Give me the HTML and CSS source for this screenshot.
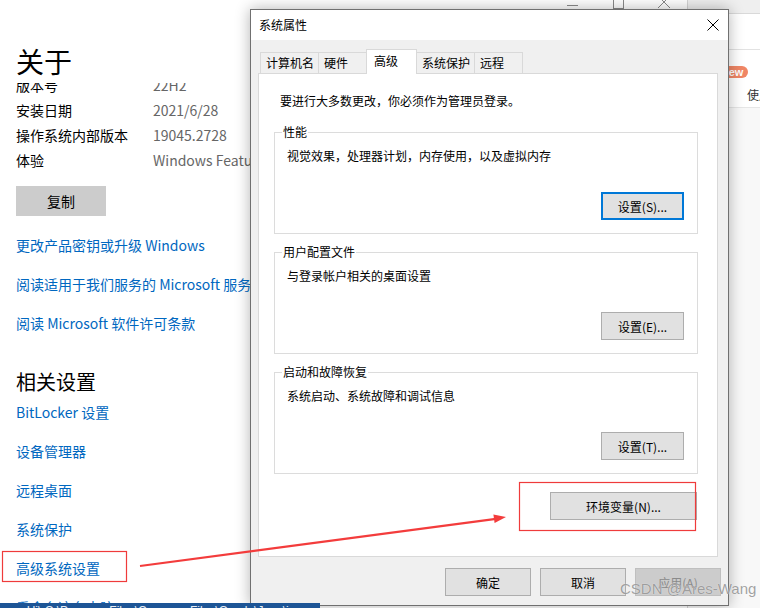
FILE: index.html
```html
<!DOCTYPE html>
<html lang="zh-CN">
<head>
<meta charset="utf-8">
<title>系统属性</title>
<link rel="stylesheet" href="styles.css">
</head>
<body>
<div class="desktop">

  <section class="settings">
    <div class="settings-caption">
      <svg class="caption-icons" width="137" height="10" viewBox="0 0 137 10">
        <line x1="17" y1="5.5" x2="28" y2="5.5" stroke="#8a8a8a" stroke-width="1"/>
        <rect x="63.5" y="-1.5" width="10" height="10" fill="none" stroke="#8a8a8a" stroke-width="1"/>
        <line x1="108" y1="-4" x2="120" y2="8" stroke="#8a8a8a" stroke-width="1"/>
        <line x1="120" y1="-4" x2="108" y2="8" stroke="#8a8a8a" stroke-width="1"/>
      </svg>
    </div>
    <header class="settings-header"><h1>关于</h1></header>
    <div class="settings-scroll">
      <div class="scroll-inner">
        <dl class="spec">
          <div class="spec-row"><dt>版本号</dt><dd>22H2</dd></div>
          <div class="spec-row"><dt>安装日期</dt><dd>2021/6/28</dd></div>
          <div class="spec-row"><dt>操作系统内部版本</dt><dd>19045.2728</dd></div>
          <div class="spec-row"><dt>体验</dt><dd>Windows Feature Experience Pack 1000.19041.1000.0</dd></div>
        </dl>
        <button class="copy-btn" type="button">复制</button>
        <ul class="links">
          <li><a href="#">更改产品密钥或升级 Windows</a></li>
          <li><a href="#">阅读适用于我们服务的 Microsoft 服务协议</a></li>
          <li><a href="#">阅读 Microsoft 软件许可条款</a></li>
        </ul>
        <h2 class="related-title">相关设置</h2>
        <ul class="links related">
          <li><a href="#">BitLocker 设置</a></li>
          <li><a href="#">设备管理器</a></li>
          <li><a href="#">远程桌面</a></li>
          <li><a href="#">系统保护</a></li>
          <li><a href="#">高级系统设置</a></li>
          <li><a href="#">重命名这台电脑</a></li>
        </ul>
      </div>
    </div>
  </section>

  <aside class="side-window">
    <div class="side-top"></div>
    <div class="side-toolbar"></div>
    <div class="side-content">
      <span class="badge">new</span>
      <span class="side-text">使用</span>
    </div>
  </aside>

  <div class="dialog">
    <div class="dlg-title">
      <h3>系统属性</h3>
      <span class="dlg-close">
        <svg width="12" height="12" viewBox="0 0 12 12">
          <line x1="0.5" y1="0.5" x2="11.5" y2="11.5" stroke="#000" stroke-width="1"/>
          <line x1="11.5" y1="0.5" x2="0.5" y2="11.5" stroke="#000" stroke-width="1"/>
        </svg>
      </span>
    </div>
    <div class="dlg-body">
      <div class="tabs">
        <span class="tab">计算机名</span>
        <span class="tab">硬件</span>
        <span class="tab active">高级</span>
        <span class="tab">系统保护</span>
        <span class="tab">远程</span>
      </div>
      <div class="panel">
        <p class="intro">要进行大多数更改，你必须作为管理员登录。</p>
        <fieldset class="group">
          <legend>性能</legend>
          <p class="group-desc">视觉效果，处理器计划，内存使用，以及虚拟内存</p>
          <div class="group-actions"><button class="btn btn-set focused" type="button">设置(S)...</button></div>
        </fieldset>
        <fieldset class="group">
          <legend>用户配置文件</legend>
          <p class="group-desc">与登录帐户相关的桌面设置</p>
          <div class="group-actions"><button class="btn btn-set" type="button">设置(E)...</button></div>
        </fieldset>
        <fieldset class="group">
          <legend>启动和故障恢复</legend>
          <p class="group-desc">系统启动、系统故障和调试信息</p>
          <div class="group-actions"><button class="btn btn-set" type="button">设置(T)...</button></div>
        </fieldset>
        <div class="env-row"><button class="btn btn-env" type="button">环境变量(N)...</button></div>
      </div>
      <div class="dlg-buttons">
        <button class="btn btn-dlg" type="button">确定</button>
        <button class="btn btn-dlg" type="button">取消</button>
        <button class="btn btn-dlg disabled" type="button">应用(A)</button>
      </div>
    </div>
  </div>

  <div class="taskbar-tip">...umHi\;C:\Program Files\Common Files\Oracle\Java\javapath</div>

  <svg class="annot" width="760" height="608" viewBox="0 0 760 608">
    <rect x="2.5" y="551.5" width="124" height="30" fill="none" stroke="#ef3b3b" stroke-width="1.2"/>
    <rect x="519.5" y="482.5" width="176" height="48" fill="none" stroke="#ef3b3b" stroke-width="1.2"/>
    <line x1="140" y1="566" x2="496" y2="518.8" stroke="#f33c3c" stroke-width="2.2"/>
    <polygon points="506,517 494.6,523 493.4,514.4" fill="#f33c3c"/>
  </svg>

  <div class="watermark">CSDN @Ares-Wang</div>
</div>
</body>
</html>
```

FILE: styles.css
```css
* { box-sizing: border-box; }
html, body { margin: 0; padding: 0; }
body {
  width: 760px;
  height: 608px;
  overflow: hidden;
  background: #fff;
  font-family: "Noto Sans CJK SC", "Noto Sans", sans-serif;
  color: #000;
}
.desktop { position: relative; width: 760px; height: 608px; overflow: hidden; }

/* background settings window */
.settings {
  position: absolute;
  left: 0; top: 0;
  width: 688px; height: 608px;
  background: #fff;
  border-right: 1px solid #d4d4d4;
  display: flex;
  flex-direction: column;
}
.settings-caption {
  flex: none;
  height: 10px;
  display: flex;
  justify-content: flex-end;
  overflow: hidden;
}
.caption-icons { display: block; }
.settings-header { flex: none; height: 73px; padding: 33px 16px 0; background: #fff; }
.settings-header h1 { margin: 0; font-size: 28px; font-weight: 400; line-height: 36px; }
.settings-scroll { flex: 1; min-height: 0; overflow: hidden; }
.scroll-inner { margin-top: -10px; padding-left: 16px; }
.spec { margin: 0; font-size: 14px; line-height: 25px; }
.spec-row { display: grid; grid-template-columns: 137px auto; white-space: nowrap; }
.spec dt { color: #000; }
.spec dd { margin: 0; color: #666; }
.copy-btn {
  display: block;
  margin-top: 13px;
  width: 90px; height: 30px;
  border: 0; padding: 0;
  background: #cccccc;
  font: 14px "Noto Sans CJK SC", sans-serif;
  color: #000;
}
.links {
  list-style: none;
  margin: 19px 0 0; padding: 0;
  display: flex; flex-direction: column; gap: 19px;
  font-size: 14px; line-height: 20px;
}
.links a { color: #0067c0; text-decoration: none; white-space: nowrap; }
.related-title { margin: 35px 0 0; font-size: 20px; font-weight: 400; line-height: 28px; }
.links.related { margin-top: 6px; }

/* right background window */
.side-window {
  position: absolute;
  left: 688px; top: 0;
  width: 72px; height: 608px;
  background: #f8f8f8;
}
.side-top { height: 14px; background: #efefef; border-bottom: 1px solid #d9d9d9; }
.side-toolbar { height: 36px; background: #fff; border-bottom: 1px solid #e2e2e2; }
.side-content {
  height: 58px;
  background: #fff;
  border-bottom: 1px solid #e6e6e6;
  padding: 16px 0 0 29px;
  display: flex; flex-direction: column; align-items: flex-start;
}
.badge {
  height: 12px; padding: 0 5px;
  border-radius: 6px;
  background: #f08665;
  color: #fff;
  font: 700 11px/12px "Liberation Sans", sans-serif;
}
.side-text { margin: 10px 0 0 30px; font-size: 12px; line-height: 14px; color: #333; white-space: nowrap; }

/* dialog */
.dialog {
  position: absolute;
  left: 250px; top: 9px;
  width: 479px; height: 597px;
  border: 1px solid #707070;
  background: #f0f0f0;
  display: flex; flex-direction: column;
  box-shadow: 0 0 14px rgba(0, 0, 0, 0.3);
  font-size: 12px;
}
.dlg-title {
  flex: none;
  height: 30px;
  background: #fff;
  display: flex; align-items: center; justify-content: space-between;
  padding-left: 8px;
}
.dlg-title h3 { margin: 0; font-size: 12px; font-weight: 400; line-height: 16px; margin-top: -1px; }
.dlg-close { width: 30px; height: 30px; display: flex; align-items: center; justify-content: center; margin-top: -1px; }
.dlg-close svg { display: block; }
.dlg-body { flex: 1; display: flex; flex-direction: column; padding: 9px 7px 9px 7px; }
.tabs {
  flex: none;
  height: 24px;
  display: flex; align-items: flex-end;
  padding-left: 2px;
  position: relative; z-index: 1;
}
.tab {
  height: 21px;
  min-width: 49px;
  padding: 0 4px 0 5px;
  border: 1px solid #d9d9d9; border-bottom: 0;
  margin-right: -1px;
  background: #f0f0f0;
  line-height: 19px;
  white-space: nowrap;
}
.tab.active {
  height: 25px;
  min-width: 51px;
  padding-left: 7px;
  margin-bottom: -1px;
  background: #fff;
  line-height: 22px;
  position: relative;
}
.panel {
  flex: none;
  height: 484px;
  margin-right: 3px;
  background: #fff;
  border: 1px solid #d9d9d9;
  padding: 19px 19px 0 15px;
}
.intro { margin: 0 0 15px 6px; line-height: 16px; }
.group {
  margin: 0 0 10px;
  min-width: 0;
  border: 1px solid #dcdcdc;
  padding: 8px 13px 13px 12px;
}
.group legend { padding: 0 1px; margin-left: -5px; line-height: 16px; font-size: 12px; }
.group-desc { margin: 0; line-height: 16px; }
.group-actions { display: flex; justify-content: flex-end; margin-top: 28px; }
.env-row { display: flex; justify-content: flex-end; margin-top: 18px; padding-right: 1px; }
.btn {
  height: 28px;
  padding: 0;
  border: 1px solid #adadad;
  background: #e1e1e1;
  font: 12px "Noto Sans CJK SC", sans-serif;
  color: #000;
}
.btn-set { width: 83px; }
.btn.focused { border: 2px solid #0078d7; }
.btn-env { width: 147px; }
.dlg-buttons { flex: none; display: flex; justify-content: flex-end; gap: 9px; margin-top: 11px; }
.btn-dlg { width: 86px; }
.btn.disabled { background: #cccccc; border-color: #bfbfbf; color: #8a8a8a; }

/* overlays */
.taskbar-tip {
  position: absolute;
  left: 0; top: 603px;
  width: 320px; height: 5px;
  overflow: hidden;
  background: #1d5596;
  color: #e8eef6;
  font: 12px/14px "Liberation Sans", sans-serif;
  padding-top: 1px;
  white-space: nowrap;
}
.annot { position: absolute; left: 0; top: 0; pointer-events: none; }
.watermark {
  position: absolute;
  left: 620px; top: 579px;
  font: 15px/20px "Liberation Sans", sans-serif;
  color: rgba(130, 130, 130, 0.75);
  text-shadow: 0 0 1px rgba(255, 255, 255, 0.9);
  white-space: nowrap;
  pointer-events: none;
}
```
